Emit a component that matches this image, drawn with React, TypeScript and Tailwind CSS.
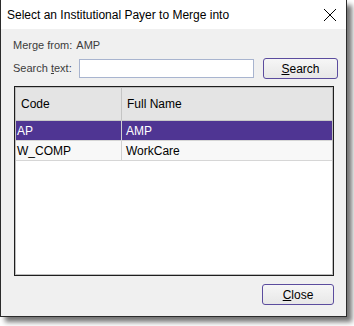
import React from "react";

const rows = [
  { code: "AP", name: "AMP", selected: true },
  { code: "W_COMP", name: "WorkCare", selected: false },
];

const App = () => {
  return (
    <div
      className="w-[354px] h-[326px] bg-white text-[12px] text-black"
      style={{ fontFamily: '"Liberation Sans", Arial, sans-serif' }}
    >
      <div className="w-[347px] h-[317px] flex flex-col border-x border-b border-[#2b2b2b] bg-[#f0f0f0] shadow-[5px_5px_5px_rgba(0,0,0,0.55)]">
        {/* title bar */}
        <div className="h-[29px] shrink-0 bg-white flex items-center justify-between pl-[6px] pr-[9px]">
          <span className="text-[12px] text-black">Select an Institutional Payer to Merge into</span>
          <svg width="14" height="14" viewBox="0 0 14 14" className="text-black">
            <path d="M1 1 L13 13 M13 1 L1 13" stroke="currentColor" strokeWidth="1" />
          </svg>
        </div>

        <div className="flex flex-col flex-1 pl-[12px] pr-[9px] pt-[8px] pb-[11px]">
          <div className="h-[16px] flex items-center gap-[4px] text-[#3c3c3c] text-[11px]">
            <span>Merge from:</span>
            <span>AMP</span>
          </div>

          <div className="grid grid-cols-[66px_175px_9px_75px] items-center mt-[5px] h-[21px]">
            <span className="text-[#3c3c3c] text-[11px]">
              Search <u>t</u>ext:
            </span>
            <input className="w-full h-[19px] bg-white border border-[#a8b4cf] outline-none" />
            <span />
            <button className="w-full h-[21px] rounded-[3px] border border-[#5b4c9e] bg-gradient-to-b from-[#f6f6f6] to-[#e7e7e7] text-[12px] text-black">
              <u>S</u>earch
            </button>
          </div>

          <div className="mt-[7px] mr-[3px] ml-[1px] flex-1 border border-[#1e1e1e] bg-white flex flex-col">
            <div className="border border-[#bdbdbd] flex-1 flex flex-col">
              <div className="h-[33px] flex bg-[#e4e4e4] border-b border-[#c8c8c8]">
                <div className="w-[106px] border-r border-[#c4c4c4] flex items-center pl-[5px]">Code</div>
                <div className="flex-1 flex items-center pl-[5px]">Full Name</div>
              </div>
              {rows.map((r) => (
                <div
                  key={r.code}
                  className={
                    r.selected
                      ? "h-[20px] flex bg-[#4f3593] text-white border-b border-[#d6d6d6]"
                      : "h-[20px] flex bg-[#f8f8f8] text-black border-b border-[#d6d6d6]"
                  }
                >
                  <div className="w-[106px] border-r border-[#d0d0d0] flex items-center pl-[1px]">{r.code}</div>
                  <div className="flex-1 flex items-center pl-[4px]">{r.name}</div>
                </div>
              ))}
            </div>
          </div>

          <div className="flex justify-end mt-[8px] pr-[3px]">
            <button className="w-[72px] h-[21px] rounded-[3px] border border-[#5b4c9e] bg-gradient-to-b from-[#f6f6f6] to-[#e7e7e7] text-[12px] text-black">
              <u>C</u>lose
            </button>
          </div>
        </div>
      </div>
    </div>
  );
};

export default App;
